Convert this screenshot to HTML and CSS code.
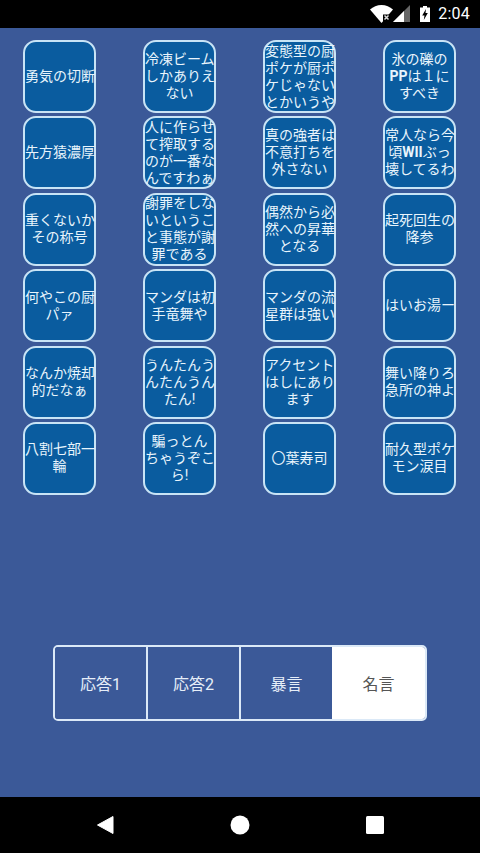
FILE: index.html
```html
<!DOCTYPE html>
<html lang="ja">
<head>
<meta charset="utf-8">
<title>名言</title>
<link rel="stylesheet" href="styles.css">
</head>
<body>
<div class="app">
  <header class="status">
    <svg class="wifi" width="23" height="18" viewBox="0 0 23 18"><path d="M0 4.500C3 1.800 7.200 0 11.500 0C15.800 0 20 1.800 23 4.500L11.500 18Z" fill="#fff"/><path d="M13 9.500h10v8.500h-10z" fill="#000"/><path d="M14.500 10.500l4 4m0-4l-4 4" stroke="#ddd" stroke-width="1.500"/></svg>
    <svg class="signal" width="17" height="17" viewBox="0 0 17 17"><path d="M0 17L17 0V17Z" fill="#666"/><path d="M0 17L11 6V17Z" fill="#fff"/></svg>
    <svg class="battery" width="10" height="16" viewBox="0 0 10 16"><path d="M3 0h4v1.500H10V16H0V1.500h3Z" fill="#fff"/><path d="M6 3L2.200 9.500h2.300L3.800 14l4-7H5.500Z" fill="#000"/></svg>
    <span class="clock">2:04</span>
  </header>
  <main class="content">
    <section class="grid">
      <button class="card">勇気の切断</button>
      <button class="card">冷凍ビーム<br>しかありえ<br>ない</button>
      <button class="card">変態型の厨<br>ポケが厨ポ<br>ケじゃない<br>とかいうや</button>
      <button class="card">氷の礫の<br><b>PP</b>は１に<br>すべき</button>
      <button class="card">先方猿濃厚</button>
      <button class="card">人に作らせ<br>て搾取する<br>のが一番な<br>んですわぁ</button>
      <button class="card">真の強者は<br>不意打ちを<br>外さない</button>
      <button class="card">常人なら今<br>頃<b>WII</b>ぶっ<br>壊してるわ</button>
      <button class="card">重くないか<br>その称号</button>
      <button class="card">謝罪をしな<br>いというこ<br>と事態が謝<br>罪である</button>
      <button class="card">偶然から必<br>然への昇華<br>となる</button>
      <button class="card">起死回生の<br>降参</button>
      <button class="card">何やこの厨<br>パァ</button>
      <button class="card">マンダは初<br>手竜舞や</button>
      <button class="card">マンダの流<br>星群は強い</button>
      <button class="card">はいお湯ー</button>
      <button class="card">なんか焼却<br>的だなぁ</button>
      <button class="card">うんたんう<br>んたんうん<br>たん!</button>
      <button class="card">アクセント<br>はしにあり<br>ます</button>
      <button class="card">舞い降りろ<br>急所の神よ</button>
      <button class="card">八割七部一<br>輪</button>
      <button class="card">騙っとん<br>ちゃうぞこ<br>ら!</button>
      <button class="card">〇葉寿司</button>
      <button class="card">耐久型ポケ<br>モン涙目</button>
    </section>
    <nav class="tabs">
      <button class="tab">応答1</button>
      <button class="tab">応答2</button>
      <button class="tab">暴言</button>
      <button class="tab active">名言</button>
    </nav>
  </main>
  <footer class="navbar">
    <svg width="18" height="20" viewBox="0 0 18 20"><path d="M17 1.500V18.500L1.500 10Z" fill="#fff" stroke="#fff" stroke-linejoin="round"/></svg>
    <svg width="20" height="20" viewBox="0 0 20 20"><circle cx="10" cy="10" r="9.500" fill="#fff"/></svg>
    <svg width="18" height="18" viewBox="0 0 18 18"><rect width="18" height="18" rx="1.500" fill="#fff"/></svg>
  </footer>
</div>
</body>
</html>
```
FILE: styles.css
```css
* { box-sizing: border-box; }
html, body { margin: 0; padding: 0; }
body { font-family: "Roboto", "Noto Sans CJK JP", sans-serif; background: #3b5998; }
.app { width: 480px; height: 853px; display: flex; flex-direction: column; overflow: hidden; }
.status { height: 28px; flex: none; background: #000; color: #fff; display: flex; align-items: center; justify-content: flex-end; padding-right: 10px; }
.signal { margin-right: 10px; margin-top: -1px; }
.battery { margin-right: 8px; }
.wifi { margin-top: -1px; }
.clock { font-size: 16px; line-height: 28px; font-weight: 400; letter-spacing: .2px; }
.content { flex: 1; display: flex; flex-direction: column; background: #3b5998; }
.grid { display: grid; grid-template-columns: repeat(4, 73px); grid-auto-rows: 73px; column-gap: 47px; row-gap: 3.4px; padding: 12px 0 0 23px; }
.card { margin: 0; padding: 0; text-align: center; white-space: nowrap; font-family: inherit; font-size: 14px; line-height: 17px; color: #e8f4fc; background: #0a5c9f; border: 2px solid #c8e4f6; border-radius: 13px; overflow: visible; display: block; }
.card b { font-weight: 700; }
.tabs { display: flex; width: 374px; height: 76px; margin: 150px 0 0 53px; border: 2px solid #dbe9f7; border-radius: 5px; overflow: hidden; }
.tab { flex: none; width: 93px; margin: 0; padding: 0; font-family: inherit; font-size: 16px; color: #e6eef8; background: #3b5998; border: 0; border-right: 2px solid #dbe9f7; }
.tab:nth-child(2) { width: 93px; }
.tab:nth-child(3) { width: 91px; border-right: 0; }
.tab.active { flex: 1; width: auto; background: #fff; color: #555; border-right: 0; }
.navbar { height: 56px; flex: none; background: #000; display: flex; align-items: center; justify-content: center; gap: 116px; }
```
